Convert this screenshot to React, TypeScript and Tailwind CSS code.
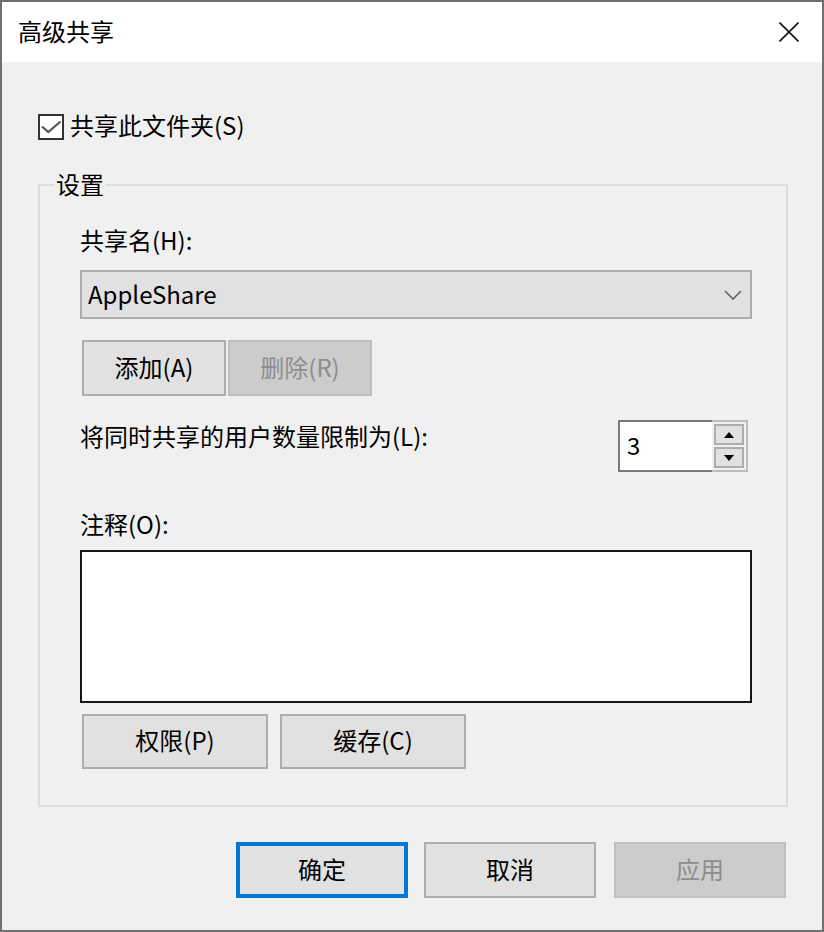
import React from "react";

const font = { fontFamily: '"Noto Sans CJK SC", "Noto Sans", sans-serif' };

function Btn({
  children,
  w,
  h,
  disabled,
  className = "",
}: {
  children: React.ReactNode;
  w: string;
  h: string;
  disabled?: boolean;
  className?: string;
}) {
  return (
    <div
      className={`${w} ${h} flex items-center justify-center border-2 pb-[3px] text-[24px] leading-[32px] ${
        disabled
          ? "bg-[#cccccc] border-[#bfbfbf] text-[#8d8d8d]"
          : "bg-[#e1e1e1] border-[#adadad] text-black"
      } ${className}`}
    >
      {children}
    </div>
  );
}

export default function App() {
  return (
    <div
      className="w-[824px] h-[932px] border-2 border-[#707070] flex flex-col bg-[#f0f0f0] text-black"
      style={font}
    >
      {/* Title bar */}
      <div className="h-[60px] bg-white flex items-center justify-between pl-[16px] pr-[23px]">
        <span className="text-[24px] leading-[32px] mb-[3px]">高级共享</span>
        <svg width="20" height="20" viewBox="0 0 20 20">
          <path d="M0.5 0.5 L19.5 19.5 M19.5 0.5 L0.5 19.5" stroke="#111" strokeWidth="1.6" fill="none" />
        </svg>
      </div>

      {/* Body */}
      <div className="flex-1 flex flex-col px-[36px]">
        {/* checkbox */}
        <div className="mt-[52px] flex items-center h-[26px]">
          <div className="w-[26px] h-[26px] border-2 border-[#333333] bg-white flex items-center justify-center">
            <svg width="22" height="22" viewBox="0 0 22 22">
              <path d="M2 10.5 L8.3 16 L20.5 5.5" stroke="#555555" strokeWidth="2.2" fill="none" />
            </svg>
          </div>
          <span className="ml-[6px] mb-[4px] text-[24px] leading-[32px]">共享此文件夹(S)</span>
        </div>

        {/* group box */}
        <div className="relative mt-[44px] w-[750px] border-2 border-[#dcdcdc] pl-[40px] pr-[34px] pt-[38px] pb-[36px]">
          <span className="absolute left-[14px] -top-[18px] px-[2px] bg-[#f0f0f0] text-[24px] leading-[32px]">
            设置
          </span>

          <div className="text-[24px] leading-[32px] h-[33px]">共享名(H):</div>

          {/* combobox */}
          <div className="mt-[13px] h-[49px] w-[672px] border-2 border-[#adadad] bg-[#e1e1e1] flex items-center justify-between pl-[6px] pr-[8px]">
            <span className="text-[24px] leading-[32px] mb-[2px]">AppleShare</span>
            <svg width="18" height="10" viewBox="0 0 18 10">
              <path d="M1 1 L9 9 L17 1" stroke="#606060" strokeWidth="1.6" fill="none" />
            </svg>
          </div>

          {/* add / delete */}
          <div className="mt-[21px] ml-[2px] flex gap-[2px]">
            <Btn w="w-[144px]" h="h-[56px]">添加(A)</Btn>
            <Btn w="w-[144px]" h="h-[56px]" disabled>
              删除(R)
            </Btn>
          </div>

          {/* limit row */}
          <div className="mt-[24px] flex items-start justify-between w-[668px]">
            <span className="text-[24px] leading-[32px]">将同时共享的用户数量限制为(L):</span>
            <div className="flex h-[52px] w-[130px]">
              <div className="w-[94px] h-full border-2 border-r-0 border-[#7a7a7a] bg-white flex items-center pl-[7px] pb-[3px]">
                <span className="text-[24px] leading-[32px]">3</span>
              </div>
              <div className="w-[36px] h-full border-2 border-l-0 border-[#bcbcbc] bg-[#f0f0f0] flex flex-col gap-[2px] p-[2px]">
                <div className="h-[21px] w-[30px] border-2 border-[#adadad] bg-[#e1e1e1] flex items-center justify-center">
                  <svg width="10" height="6" viewBox="0 0 10 6">
                    <path d="M5 0 L10 6 L0 6 Z" fill="#000" />
                  </svg>
                </div>
                <div className="h-[21px] w-[30px] border-2 border-[#adadad] bg-[#e1e1e1] flex items-center justify-center">
                  <svg width="10" height="6" viewBox="0 0 10 6">
                    <path d="M0 0 L10 0 L5 6 Z" fill="#000" />
                  </svg>
                </div>
              </div>
            </div>
          </div>

          {/* comment */}
          <div className="mt-[36px] text-[24px] leading-[32px] h-[33px]">注释(O):</div>
          <div className="mt-[9px] h-[153px] w-[672px] border-2 border-[#171717] bg-white" />

          <div className="mt-[11px] ml-[2px] flex gap-[12px]">
            <Btn w="w-[186px]" h="h-[55px]">权限(P)</Btn>
            <Btn w="w-[186px]" h="h-[55px]">缓存(C)</Btn>
          </div>
        </div>

        {/* bottom buttons */}
        <div className="mt-[35px] ml-[198px] flex">
          <div className="w-[172px] h-[56px] border-4 border-[#0078d7] bg-[#e1e1e1] flex items-center justify-center pb-[3px] text-[24px] leading-[32px]">
            确定
          </div>
          <Btn w="w-[172px]" h="h-[56px]" className="ml-[16px]">
            取消
          </Btn>
          <Btn w="w-[172px]" h="h-[56px]" className="ml-[18px]" disabled>
            应用
          </Btn>
        </div>
      </div>
    </div>
  );
}
